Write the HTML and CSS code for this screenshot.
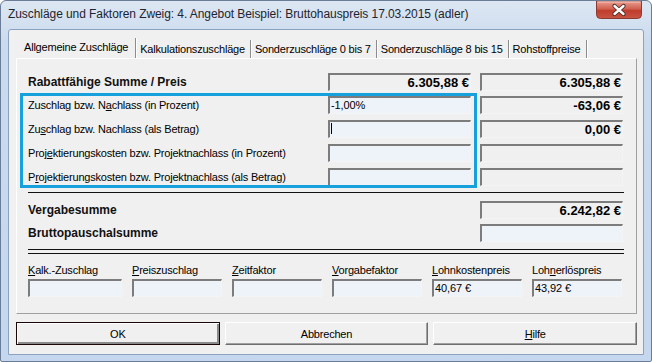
FILE: index.html
```html
<!DOCTYPE html>
<html lang="de">
<head>
  <meta charset="UTF-8">
  <title>Zuschläge und Faktoren</title>
  <link rel="stylesheet" href="styles.css">
</head>
<body>
  <div class="window">
    <div class="titlebar">
      <span class="title">Zuschläge und Faktoren Zweig: 4. Angebot Beispiel: Bruttohauspreis 17.03.2015 (adler)</span>
      <div class="close">
        <svg width="46" height="18" viewBox="0 0 46 18">
          <defs>
            <linearGradient id="red" x1="0" y1="0" x2="0" y2="1">
              <stop offset="0" stop-color="#e9a092"/>
              <stop offset="0.45" stop-color="#d0604f"/>
              <stop offset="0.55" stop-color="#bf3c2c"/>
              <stop offset="1" stop-color="#c85544"/>
            </linearGradient>
          </defs>
          <path d="M0.5 0 H45.5 V13.5 Q45.5 17.5 41.5 17.5 H4.5 Q0.5 17.5 0.5 13.5 Z" fill="url(#red)" stroke="#8b3a32"/>
          <path d="M1.5 1 H44.5" stroke="#f3c9c0"/>
          <path d="M18.5 5 L27.5 13 M27.5 5 L18.5 13" stroke="#4a2622" stroke-width="4.2" stroke-linecap="round"/>
          <path d="M18.5 5 L27.5 13 M27.5 5 L18.5 13" stroke="#ffffff" stroke-width="2.4" stroke-linecap="round"/>
        </svg>
      </div>
    </div>

    <div class="client">
      <div class="tabs">
        <div class="tab active">Allgemeine Zuschläge</div>
        <div class="tab">Kalkulationszuschläge</div>
        <div class="tab">Sonderzuschläge 0 bis 7</div>
        <div class="tab">Sonderzuschläge 8 bis 15</div>
        <div class="tab">Rohstoffpreise</div>
      </div>

      <div class="pane">
        <div class="grid">
          <div class="label bold">Rabattfähige Summe / Preis</div>
          <div class="field value">6.305,88 €</div>
          <div class="field value">6.305,88 €</div>
        </div>

        <div class="grid group">
          <div class="label">Zuschlag bzw. N<u>a</u>chlass (in Prozent)</div>
          <div class="field input text">-1,00%</div>
          <div class="field value">-63,06 €</div>

          <div class="label">Zu<u>s</u>chlag bzw. Nachlass (als Betrag)</div>
          <div class="field input"><span class="caret"></span></div>
          <div class="field value">0,00 €</div>

          <div class="label">Proj<u>e</u>ktierungskosten bzw. Projektnachlass (in Prozent)</div>
          <div class="field input"></div>
          <div class="field value"></div>

          <div class="label">P<u>r</u>ojektierungskosten bzw. Projektnachlass (als Betrag)</div>
          <div class="field input"></div>
          <div class="field value"></div>

          <div class="highlight"></div>
        </div>

        <div class="rule"></div>

        <div class="grid totals">
          <div class="label bold">Vergabesumme</div>
          <div></div>
          <div class="field value">6.242,82 €</div>

          <div class="label bold">Bruttopauschalsumme</div>
          <div></div>
          <div class="field input"></div>
        </div>

        <div class="double-rule"></div>

        <div class="factors">
          <div class="factor">
            <div class="label"><u>K</u>alk.-Zuschlag</div>
            <div class="field input"></div>
          </div>
          <div class="factor">
            <div class="label"><u>P</u>reiszuschlag</div>
            <div class="field input"></div>
          </div>
          <div class="factor">
            <div class="label"><u>Z</u>eitfaktor</div>
            <div class="field input"></div>
          </div>
          <div class="factor">
            <div class="label"><u>V</u>orgabefaktor</div>
            <div class="field input"></div>
          </div>
          <div class="factor">
            <div class="label"><u>L</u>ohnkostenpreis</div>
            <div class="field input text">40,67 €</div>
          </div>
          <div class="factor">
            <div class="label">Loh<u>n</u>erlöspreis</div>
            <div class="field input text">43,92 €</div>
          </div>
        </div>
      </div>

      <div class="buttons">
        <button class="btn default">OK</button>
        <button class="btn">Abbrechen</button>
        <button class="btn"><u>H</u>ilfe</button>
      </div>
    </div>
  </div>
</body>
</html>
```

FILE: styles.css
```css
* { box-sizing: border-box; }
body { margin: 0; font-family: "Liberation Sans", Arial, sans-serif; font-size: 11px; color: #000; }

.window { width: 652px; height: 362px; display: flex; flex-direction: column; border: 1px solid #6b7d96; border-radius: 6px 6px 2px 2px; background: linear-gradient(#dde7f3, #cbdbee 40px, #c4d7ee); padding: 0 7px 6px 7px; }

.titlebar { height: 28px; display: flex; justify-content: space-between; align-items: flex-start; }
.title { font-size: 12px; letter-spacing: -0.07px; color: #1e2430; line-height: 16px; margin-top: 5px; white-space: nowrap; }
.close { width: 46px; height: 18px; margin-right: 2px; }
.close svg { display: block; }

.client { flex: 1; background: #f0f0f0; border: 1px solid #8ba2bf; border-radius: 3px 3px 0 0; padding: 6px 6px 9px 7px; display: flex; flex-direction: column; }

.tabs { height: 22px; display: flex; align-items: flex-end; padding-left: 1px; }
.tab { height: 18px; line-height: 18px; padding: 0 5px 0 4px; letter-spacing: -0.2px; border-right: 1px solid #8c8c8c; box-shadow: 1px 0 0 #fff; white-space: nowrap; }
.tab.active { height: 20px; line-height: 19px; padding: 0 7px 0 7px; }

.pane { border: 1px solid; border-color: #fff #a0a0a0 #a0a0a0 #fff; padding: 14px 12px 16px 11px; }

.grid { display: grid; grid-template-columns: 291px 143px 143px; column-gap: 9px; }
.group { margin-top: 5px; row-gap: 6px; position: relative; }
.totals { row-gap: 5px; margin-top: 8px; }

.label { line-height: 18px; letter-spacing: -0.2px; white-space: nowrap; }
.label.bold { font-weight: bold; font-size: 12px; letter-spacing: 0; color: #111; }

.field { height: 18px; border: 2px solid; border-color: #7c7c7c #f4f4f4 #f4f4f4 #7c7c7c; border-width: 2px 1px 1px 2px; }
.field.input { background: #eef2f9; }
.field.value { text-align: right; font-weight: bold; font-size: 13px; line-height: 15px; padding-right: 1px; }
.field.text { line-height: 15px; padding-left: 1px; letter-spacing: -0.1px; }
.caret { display: block; width: 1px; height: 11px; background: #000; margin: 1px 0 0 1px; }

.highlight { position: absolute; left: -8px; top: -3px; width: 457px; height: 95px; border: 3px solid #17a1dc; pointer-events: none; }

.rule { height: 1px; background: #111; margin-top: 6px; }
.double-rule { height: 5px; border-top: 1px solid #111; border-bottom: 1px solid #111; margin-top: 7px; }

.factors { display: grid; grid-template-columns: 94px repeat(5, 90px); column-gap: 10px; margin-top: 9px; }
.factor .label { line-height: 14px; margin-bottom: 2px; }

.buttons { display: grid; grid-template-columns: repeat(3, 1fr); column-gap: 5px; margin-top: 8px; }
.btn { height: 23px; font-family: inherit; font-size: 11px; letter-spacing: -0.2px; background: #f0f0f0; border: 1px solid; border-color: #fff #6e6e6e #6e6e6e #fff; box-shadow: inset -1px -1px 0 #a0a0a0; padding: 0; color: #000; }
.btn.default { border: 1px solid #1a0606; box-shadow: inset 1px 1px 0 #fff, inset -2px -2px 0 #8a8a8a; }
```
